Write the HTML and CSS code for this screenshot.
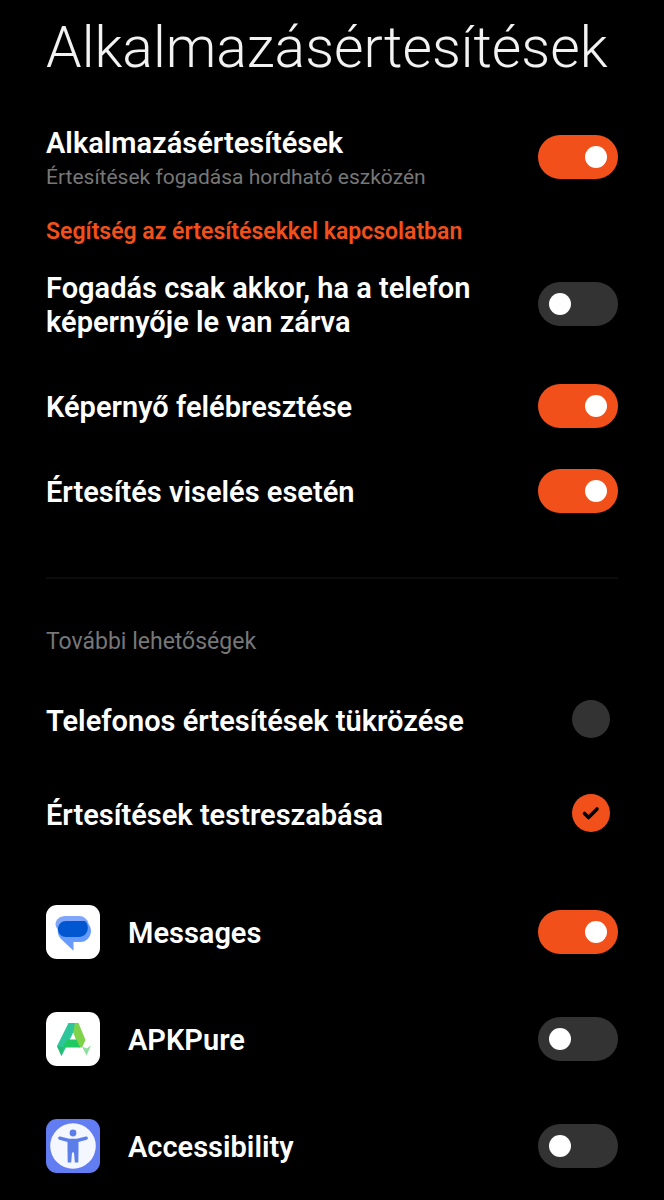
FILE: index.html
```html
<!DOCTYPE html>
<html lang="hu">
<head>
<meta charset="utf-8">
<meta name="viewport" content="width=device-width, initial-scale=1">
<title>Alkalmazásértesítések</title>
<link rel="stylesheet" href="styles.css">
</head>
<body>
<main class="page">
  <h1 class="page-title">Alkalmazásértesítések</h1>

  <section class="group">
    <label class="row row-main">
      <span class="row-text">
        <span class="label">Alkalmazásértesítések</span>
        <span class="hint">Értesítések fogadása hordható eszközén</span>
      </span>
      <input class="switch" type="checkbox" role="switch" checked>
    </label>
    <a class="help-link" href="#help">Segítség az értesítésekkel kapcsolatban</a>
    <label class="row row-locked">
      <span class="label">Fogadás csak akkor, ha a telefon képernyője le van zárva</span>
      <input class="switch" type="checkbox" role="switch">
    </label>
    <label class="row">
      <span class="label">Képernyő felébresztése</span>
      <input class="switch" type="checkbox" role="switch" checked>
    </label>
    <label class="row">
      <span class="label">Értesítés viselés esetén</span>
      <input class="switch" type="checkbox" role="switch" checked>
    </label>
  </section>

  <hr class="divider">

  <section class="group">
    <h2 class="section-title">További lehetőségek</h2>
    <label class="row row-option">
      <span class="label">Telefonos értesítések tükrözése</span>
      <span class="option">
        <input class="radio" type="radio" name="mode">
      </span>
    </label>
    <label class="row row-option">
      <span class="label">Értesítések testreszabása</span>
      <span class="option">
        <input class="radio" type="radio" name="mode" checked>
        <svg class="tick" viewBox="0 0 38 38" aria-hidden="true"><path d="M12.500 19.500l4 4 8.500-8.500" fill="none" stroke="#000" stroke-width="3.600" stroke-linecap="round" stroke-linejoin="round"/></svg>
      </span>
    </label>
  </section>

  <section class="apps">
    <label class="row row-app">
      <svg class="app-icon" viewBox="0 0 54 54" aria-hidden="true">
        <rect width="54" height="54" rx="11" fill="#fff"/>
        <path d="M19 11h14.500a9.500 9.500 0 0 1 9 7.500L42 26H14c-2.500-1.500-4.500-4-4.500-6.500 0-5 4.500-8.500 9.500-8.500z" fill="#7fa6f8"/>
        <path d="M21 16h16c4.500 1 8 5 8 9.700 0 6-4.500 11.300-10.500 11.300H27.500v8.700L15.500 34.500C13 32 11.700 29 11.700 25.500 11.700 20 16 16 21 16z" fill="#679bff"/>
        <path d="M20 16H39c1.800 1.500 2.800 4 2.800 7 0 5-4 9-9 9H20c-4.500 0-8-3.500-8-8s3.500-8 8-8z" fill="#0057d0"/>
      </svg>
      <span class="label">Messages</span>
      <input class="switch" type="checkbox" role="switch" checked>
    </label>
    <label class="row row-app">
      <svg class="app-icon" viewBox="0 0 54 54" aria-hidden="true">
        <rect width="54" height="54" rx="11" fill="#fff"/>
        <path d="M22.500 11H32.500l7 17-3.500 7.500h-3L27 20z" fill="#7ed34b"/>
        <path d="M22.500 11h6.500l-2 10-7 14.500L15.500 44 11 34z" fill="#2fc59a"/>
        <path d="M21 27.500h9.500l3.500 8H16.500z" fill="#1fca63"/>
        <path d="M11 34l7 1.500L15.500 44z" fill="#25bd72"/>
        <path d="M36 34.500l4.500 2 4.500-3-4.500 10z" fill="#8edf9f"/>
      </svg>
      <span class="label">APKPure</span>
      <input class="switch" type="checkbox" role="switch">
    </label>
    <label class="row row-app">
      <svg class="app-icon" viewBox="0 0 54 54" aria-hidden="true">
        <rect width="54" height="54" rx="11" fill="#627df2"/>
        <circle cx="27" cy="27" r="22.800" fill="#f4f7ff"/>
        <circle cx="27" cy="14" r="3.400" fill="#5b7ee9"/>
        <path d="M13.800 19.200l9 2.300h8.400l9-2.300" fill="none" stroke="#5b7ee9" stroke-width="3.400" stroke-linecap="round"/>
        <path d="M21.500 20.500h11v10l-.2 13h-3.500l-.8-10h-2l-.8 10h-3.500L21.500 30z" fill="#5b7ee9"/>
      </svg>
      <span class="label">Accessibility</span>
      <input class="switch" type="checkbox" role="switch">
    </label>
  </section>
</main>
</body>
</html>
```
FILE: styles.css
```css
* {
  box-sizing: border-box;
}

body {
  margin: 0;
  background: #000;
  color: #fff;
  font-family: Roboto, "Liberation Sans", sans-serif;
}

.page {
  padding: 15px 46px 0;
}

.page-title {
  margin: 0 0 38px;
  font-size: 57px;
  font-weight: 300;
  line-height: 66px;
  color: #f2f2f2;
}

.row {
  display: flex;
  align-items: center;
  justify-content: space-between;
  gap: 28px;
  min-height: 85px;
}

.row-main {
  min-height: 74px;
}

.row-text {
  display: flex;
  flex-direction: column;
  padding-top: 4px;
}

.row-locked {
  min-height: 71px;
  margin: 22px 0 24px;
}

.label {
  padding-top: 3px;
  font-size: 29px;
  font-weight: 600;
  line-height: 34px;
}

.hint {
  font-size: 21px;
  line-height: 34px;
  color: #777;
}

.help-link {
  display: block;
  margin-top: 24px;
  font-size: 23px;
  font-weight: 600;
  line-height: 28px;
  color: #f2501a;
  text-decoration: none;
}

.divider {
  height: 2px;
  margin: 44px 0 48px;
  border: 0;
  background: #0c0c0c;
}

.section-title {
  margin: 0 0 15px;
  font-size: 23px;
  font-weight: 400;
  line-height: 30px;
  color: #777;
}

.row-option {
  min-height: 94px;
}

.apps {
  margin-top: 18px;
}

.row-app {
  min-height: 107px;
}

.row-app .label {
  flex: 1;
}

.app-icon {
  flex: none;
  width: 54px;
  height: 54px;
}

.switch {
  appearance: none;
  display: flex;
  align-items: center;
  flex: none;
  width: 80px;
  height: 44px;
  margin: 0;
  padding: 0 11px;
  border-radius: 22px;
  background: #333;
}

.switch::before {
  content: "";
  width: 22px;
  height: 22px;
  border-radius: 50%;
  background: #fff;
}

.switch:checked {
  justify-content: flex-end;
  background: #f2501a;
}

.option {
  position: relative;
  display: flex;
  flex: none;
  margin-right: 8px;
}

.radio {
  appearance: none;
  width: 38px;
  height: 38px;
  margin: 0;
  border-radius: 50%;
  background: #333;
}

.radio:checked {
  background: #f2501a;
}

.tick {
  position: absolute;
  inset: 0;
  pointer-events: none;
}
```
